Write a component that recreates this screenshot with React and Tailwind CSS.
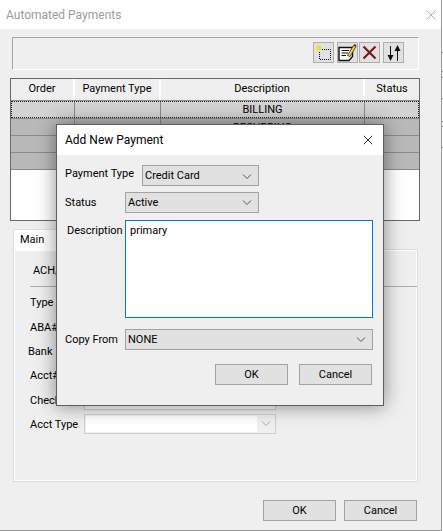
import { X } from 'lucide-react';

const font = { fontFamily: 'Roboto, sans-serif' };

const Chevron = ({ color = '#555' }) => (
    <svg width="10" height="6" viewBox="0 0 10 6" fill="none" stroke={color} strokeWidth="1">
        <path d="M1 0.5 L5 4.5 L9 0.5" />
    </svg>
);

const Select = ({ value, className }) => (
    <div className={`flex items-center justify-between h-[21px] border border-[#a3a3a3] bg-[#e1e1e1] pl-[2px] pr-[6px] text-[11px] text-black ${className}`}>
        <span>{value}</span>
        <Chevron />
    </div>
);

const Button = ({ children }) => (
    <button className="w-[73px] h-[21px] border border-[#a3a3a3] bg-[#e1e1e1] text-[11px] leading-none text-black">
        {children}
    </button>
);

const ToolButton = ({ children }) => (
    <div className="w-[21px] h-[21px] border border-[#adadad] bg-[#e1e1e1] flex items-center justify-center">
        {children}
    </div>
);

const NewIcon = () => (
    <svg width="17" height="17" viewBox="0 0 17 17" fill="none">
        <path d="M7 5.5 H15.5 V15.5 H4.5 V8" stroke="#111" strokeDasharray="1 1" />
        <path d="M4 1 V7 M1 4 H7 M2 2 L6 6 M6 2 L2 6" stroke="#eedd22" strokeWidth="1.1" />
    </svg>
);

const EditIcon = () => (
    <svg width="19" height="19" viewBox="0 0 19 19" fill="none">
        <path d="M1 4.5 H14.5 V13.5 L11 17.5 H1 Z" fill="#fff" stroke="#111" strokeWidth="1.4" />
        <path d="M3.5 7.5 H11 M3.5 10 H10 M3.5 12.5 H8" stroke="#111" />
        <path d="M9.5 12.5 L15.5 2.5 L18 3.5 L12 13.5 Z" fill="#f0dc30" stroke="#222" strokeWidth="0.8" />
        <path d="M15.5 2.5 L16.3 1 L18.5 2 L18 3.5 Z" fill="#9a2020" />
    </svg>
);

const DeleteIcon = () => (
    <svg width="15" height="15" viewBox="0 0 15 15" fill="none" stroke="#7c1a1a" strokeWidth="2.2">
        <path d="M1.5 1.5 L13.5 13.5 M13.5 1.5 L1.5 13.5" />
    </svg>
);

const OrderIcon = () => (
    <svg width="14" height="18" viewBox="0 0 14 18" fill="#111">
        <rect x="3" y="2" width="1" height="11" />
        <path d="M0.5 11 H6.5 L3.5 17 Z" />
        <rect x="10" y="5" width="1" height="12" />
        <path d="M7.5 7 H13.5 L10.5 1 Z" />
    </svg>
);

const columns = [
    ['Order', 'w-[64px]'],
    ['Payment Type', 'w-[86px]'],
    ['Description', 'w-[204px]'],
    ['Status', 'flex-1'],
];

const TableRow = ({ text, first }) => (
    <div className={`flex h-[17px] ${first ? 'bg-[#d3d3d3] outline-1 -outline-offset-1 outline-dotted outline-[#222]' : 'bg-[#b9b9b9] border-t border-[#8a8a8a]'}`}>
        {columns.map(([name, width], i) => (
            <div key={name} className={`${width} text-center text-[11px] leading-[18px] ${i < 3 ? 'border-r border-[#8a8a8a]' : ''}`}>
                {i === 2 ? text : ''}
            </div>
        ))}
    </div>
);

const BackField = ({ label, labelClass = '', h = 'h-[24px]', input }) => (
    <div className={`flex items-center ${h}`}>
        <span className={`w-[54px] text-[11px] text-black whitespace-nowrap ${labelClass}`}>{label}</span>
        {input}
    </div>
);

const ticks = [52, 18, 5, 20, 22, 4, 20];

const App = () => {
    return (
        <div style={font} className="relative flex w-[443px] h-[531px] bg-white overflow-hidden">
            <div className="flex flex-col w-[442px] h-[531px] border-r border-b border-[#9a9a9a] bg-[#efefef]">
                <div className="flex items-center justify-between h-[29px] bg-white pl-[6px] pr-[3px]">
                    <span className="text-[12px] text-[#9b9b9b]">Automated Payments</span>
                    <X size={16} strokeWidth={1} color="#8a8a8a" className="mr-[-1px]" />
                </div>

                <div className="ml-[12px] mt-[8px] w-[407px] h-[33px] border border-t-[#a5a5a5] border-l-[#a5a5a5] border-r-white border-b-white flex items-center justify-end pr-[14px]">
                    <div className="flex mt-[-2px]">
                        <ToolButton><NewIcon /></ToolButton>
                        <div className="w-[3px]" />
                        <ToolButton><EditIcon /></ToolButton>
                        <div className="w-[1px]" />
                        <ToolButton><DeleteIcon /></ToolButton>
                        <div className="w-[3px]" />
                        <ToolButton><OrderIcon /></ToolButton>
                    </div>
                </div>

                <div className="ml-[10px] mt-[8px] w-[410px] h-[143px] border border-[#696969] bg-white">
                    <div className="flex h-[22px] bg-[#efefef] border-b border-[#8a8a8a]">
                        {columns.map(([name, width], i) => (
                            <div key={name} className={`${width} text-center text-[11px] leading-[20px] text-black ${i < 3 ? 'border-r-2 border-white' : ''}`}>
                                {name}
                            </div>
                        ))}
                    </div>
                    <TableRow text="BILLING" first />
                    <TableRow text="RECURRING" />
                    <TableRow text="" />
                    <TableRow text="" />
                    <div className="border-t border-[#8a8a8a]" />
                </div>

                <div className="relative z-10 ml-[13px] mt-[8px] mb-[-2px] w-[67px] h-[22px] bg-white border-t border-l border-[#e0e0e0] text-[11px] leading-[20px] pl-[6px] text-black">Main</div>
                <div className="ml-[13px] w-[405px] h-[233px] border border-[#dcdcdc] shadow-[inset_0_0_0_1px_#ffffff] pl-[16px] pt-[1px]">
                    <div className="pl-[3px] pt-[12px] h-[36px] text-[11px] leading-[16px] text-black border-b border-[#adadad]">ACH/</div>
                    <BackField label="Type" labelClass="pt-[4px]" h="h-[29px]" />
                    <BackField label="ABA#" labelClass="pt-[2px]" h="h-[22px]" />
                    <BackField label="Bank" labelClass="ml-[-2px] pt-[4px]" h="h-[25px]" />
                    <BackField label="Acct#" labelClass="pt-[2px]" />
                    <BackField
                        label="Check"
                        labelClass="pt-[4px]"
                        h="h-[25px]"
                        input={<div className="w-[192px] h-[20px] border border-[#cfcfcf] bg-white" />}
                    />
                    <BackField
                        label="Acct Type"
                        labelClass="pt-[2px]"
                        input={
                            <div className="flex items-center w-[192px] h-[20px] border border-[#cfcfcf] pl-[1px] py-[1px]">
                                <div className="flex-1 h-full bg-white" />
                                <div className="w-[18px] flex justify-center"><Chevron color="#aaa" /></div>
                            </div>
                        }
                    />
                </div>

                <div className="flex justify-end gap-[8px] mt-[18px] w-[417px]">
                    <Button>OK</Button>
                    <Button>Cancel</Button>
                </div>
            </div>

            <div className="flex-1">
                {ticks.map((t, i) => (
                    <div key={i} style={{ marginTop: t }} className="h-px bg-[#8a8a8a]" />
                ))}
            </div>

            <div className="absolute z-20 left-[56px] top-[124px] w-[328px] h-[282px] border border-[#5f5f5f] bg-[#efefef] shadow-[0_0_18px_rgba(0,0,0,0.45)]">
                <div className="flex items-center justify-between h-[30px] bg-white pl-[8px] pr-[7px]">
                    <span className="text-[12px] text-black">Add New Payment</span>
                    <X size={16} strokeWidth={1.3} color="#111" />
                </div>
                <div className="flex items-center h-[21px] mt-[10px] pl-[8px]">
                    <span className="w-[77px] pb-[2px] text-[11px] whitespace-nowrap text-black">Payment Type</span>
                    <Select value="Credit Card" className="w-[117px] pt-[2px]" />
                </div>
                <div className="flex items-center h-[21px] mt-[6px] pl-[8px]">
                    <span className="w-[60px] pt-[2px] text-[11px] text-black">Status</span>
                    <Select value="Active" className="w-[134px] pt-[1px]" />
                </div>
                <div className="flex mt-[7px] pl-[10px]">
                    <span className="w-[58px] pt-[3px] text-[11px] whitespace-nowrap text-black">Description</span>
                    <div className="w-[248px] h-[98px] border border-[#0078d7] bg-white pl-[4px] text-[11px] leading-[16px] pt-[2px] text-black">primary</div>
                </div>
                <div className="flex items-center h-[21px] mt-[11px] pl-[8px]">
                    <span className="w-[60px] pt-[2px] text-[11px] whitespace-nowrap text-black">Copy From</span>
                    <Select value="NONE" className="w-[248px] pt-[1px]" />
                </div>
                <div className="flex gap-[11px] mt-[14px] pl-[158px]">
                    <Button>OK</Button>
                    <Button>Cancel</Button>
                </div>
            </div>
        </div>
    );
};

export default App;
